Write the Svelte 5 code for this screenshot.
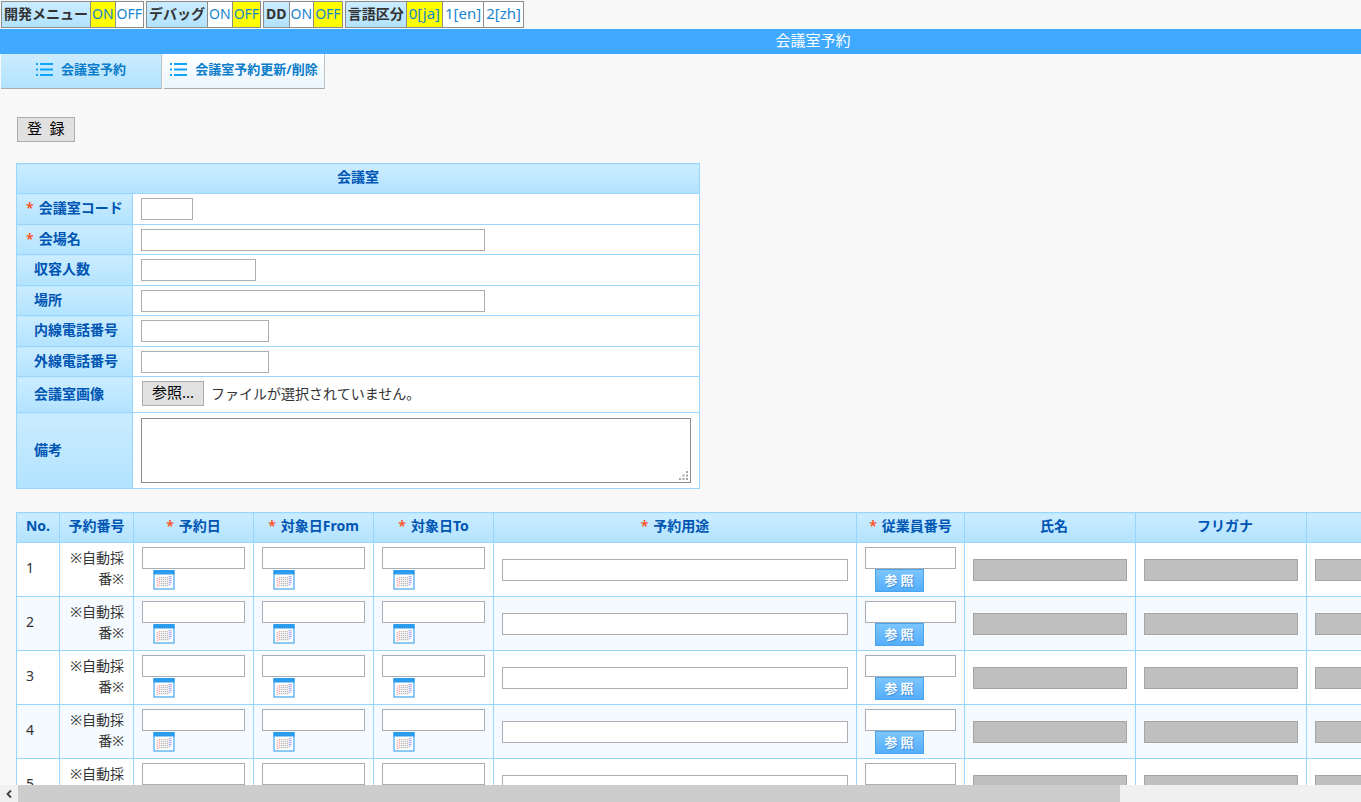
<script>
  const menus = [
    { label: '開発メニュー', options: ['ON', 'OFF'], active: 0 },
    { label: 'デバッグ', options: ['ON', 'OFF'], active: 1 },
    { label: 'DD', options: ['ON', 'OFF'], active: 1 },
    { label: '言語区分', options: ['0[ja]', '1[en]', '2[zh]'], active: 0, wide: true }
  ];
  const tabs = ['会議室予約', '会議室予約更新/削除'];
  const fields = [
    { id: 'code', label: '会議室コード', required: true, size: 'xs' },
    { id: 'name', label: '会場名', required: true, size: 'lg' },
    { id: 'capacity', label: '収容人数', required: false, size: 'sm' },
    { id: 'place', label: '場所', required: false, size: 'lg' },
    { id: 'ext', label: '内線電話番号', required: false, size: 'md' },
    { id: 'tel', label: '外線電話番号', required: false, size: 'md' }
  ];
  const columns = [
    { label: 'No.', cls: 'no' },
    { label: '予約番号', cls: 'number' },
    { label: '予約日', cls: 'date', required: true },
    { label: '対象日From', cls: 'date', required: true },
    { label: '対象日To', cls: 'date', required: true },
    { label: '予約用途', cls: 'purpose', required: true },
    { label: '従業員番号', cls: 'employee', required: true },
    { label: '氏名', cls: 'person' },
    { label: 'フリガナ', cls: 'person' },
    { label: '', cls: 'rest' }
  ];
  const rows = [1, 2, 3, 4, 5, 6];
  let current = $state(0);
</script>

{#snippet calendar()}
  <svg width="22" height="20" viewBox="0 0 22 20" aria-hidden="true">
    <rect x="1" y="1" width="20" height="18" fill="#fff" stroke="#5fb2f0" stroke-width="1.400" />
    <rect x="0.5" y="0" width="21" height="4.500" fill="#2b9bee" />
    <g stroke-width="1.400" stroke-dasharray="1.3 0.7">
      <path stroke="#f5a9a9" d="M4.500 8v9M6.500 7v10" />
      <path stroke="#bcbcbc" d="M8.500 7v10M10.500 7v10M12.500 7v10M14.500 7v10" />
      <path stroke="#b0a8f2" d="M16.500 6v10M18 6v8" />
    </g>
  </svg>
{/snippet}

<div class="screen">
  <div class="viewport">
    <div class="page">
      <nav class="dev">
        {#each menus as menu}
          <div class="menu" class:wide={menu.wide}>
            <strong>{menu.label}</strong>
            {#each menu.options as option, i}
              <a href="#top" class:on={menu.active === i}>{option}</a>
            {/each}
          </div>
        {/each}
      </nav>
      <h1>会議室予約</h1>
      <div class="tabs">
        {#each tabs as tab, i}
          <button class="tab" class:current={current === i} onclick={() => (current = i)}>
            <svg width="17" height="13" viewBox="0 0 17 13" aria-hidden="true">
              <path d="M0 1h2M4 1h13M0 6.500h2M4 6.500h13M0 12h2M4 12h13" stroke="#12a5f7" stroke-width="2" />
            </svg>
            <span>{tab}</span>
          </button>
        {/each}
      </div>

      <main>
        <button class="plain submit">登&ensp;録</button>

        <table class="room">
          <colgroup><col class="heads" /><col /></colgroup>
          <thead><tr><th colspan="2">会議室</th></tr></thead>
          <tbody>
            {#each fields as f}
              <tr>
                <th class:req={f.required}>
                  {#if f.required}<b>*</b>{/if}<label for={f.id}>{f.label}</label>
                </th>
                <td><input id={f.id} class={f.size} type="text" /></td>
              </tr>
            {/each}
            <tr class="filerow">
              <th><label for="image">会議室画像</label></th>
              <td>
                <div class="file">
                  <button id="image" class="plain">参照...</button>
                  <span>ファイルが選択されていません。</span>
                </div>
              </td>
            </tr>
            <tr class="noterow">
              <th><label for="note">備考</label></th>
              <td>
                <div class="note">
                  <textarea id="note"></textarea>
                  <svg class="grip" width="10" height="10" viewBox="0 0 10 10" aria-hidden="true">
                    <path fill="#a5a5a5" d="M7 0h2v2H7zM3.500 3.500h2v2h-2zM7 3.500h2v2H7zM0 7h2v2H0zM3.500 7h2v2h-2zM7 7h2v2H7z" />
                  </svg>
                </div>
              </td>
            </tr>
          </tbody>
        </table>

        <table class="list">
          <colgroup>
            {#each columns as c}<col class={c.cls} />{/each}
          </colgroup>
          <thead>
            <tr>
              {#each columns as c}
                <th class:readonly={c.cls === 'person'}>{#if c.required}<b>*</b>{/if}{c.label}</th>
              {/each}
            </tr>
          </thead>
          <tbody>
            {#each rows as n}
              <tr>
                <td class="text">{n}</td>
                <td class="text auto">※自動採番※</td>
                {#each ['予約日', '対象日From', '対象日To'] as name}
                  <td>
                    <div class="stack">
                      <input type="text" aria-label={name} />
                      <button class="cal" aria-label={name}>{@render calendar()}</button>
                    </div>
                  </td>
                {/each}
                <td><input type="text" aria-label="予約用途" /></td>
                <td>
                  <div class="stack">
                    <input type="text" aria-label="従業員番号" />
                    <button class="lookup">参照</button>
                  </div>
                </td>
                <td><input type="text" readonly aria-label="氏名" /></td>
                <td><input type="text" readonly aria-label="フリガナ" /></td>
                <td><input type="text" readonly /></td>
              </tr>
            {/each}
          </tbody>
        </table>
      </main>
    </div>
  </div>
  <div class="scrollbar">
    <span class="arrow">
      <svg width="8" height="10" viewBox="0 0 8 10" aria-hidden="true">
        <path d="M6 1.500 2.500 5 6 8.500" fill="none" stroke="#404040" stroke-width="1.800" />
      </svg>
    </span>
    <span class="thumb"></span>
  </div>
</div>

<style>
  :global(body) {
    margin: 0;
    background: #f8f8f8;
  }
  .screen,
  .screen * {
    box-sizing: border-box;
  }
  .screen {
    height: 100vh;
    display: flex;
    flex-direction: column;
    font: 14px/21px 'Noto Sans', 'Noto Sans CJK JP', sans-serif;
    color: #333;
  }
  button,
  input,
  textarea {
    font: inherit;
    margin: 0;
  }
  .viewport {
    flex: 1;
    min-height: 0;
    overflow: hidden;
  }
  .page {
    width: max-content;
    min-width: 100%;
  }
  .dev {
    display: flex;
    gap: 2px;
    padding: 1px 1px;
  }
  .menu {
    display: flex;
    height: 27px;
    border: 1px solid #8c8c8c;
    line-height: 23px;
    background: #fff;
  }
  .menu strong {
    padding: 0 2px;
    background: linear-gradient(#cbecff, #b2e3ff);
  }
  .menu a {
    padding: 0 1px;
    border-left: 1px solid #8c8c8c;
    color: #1a85cf;
    text-decoration: none;
  }
  .menu.wide a {
    padding: 0 2px;
    font-size: 15px;
  }
  .menu a.on {
    background: #ff0;
  }
  h1 {
    margin: 0;
    height: 25px;
    background: #3fa9ff;
    color: #fff;
    font-size: 15px;
    font-weight: 400;
    line-height: 23px;
    text-align: center;
  }
  .tabs {
    display: flex;
    gap: 2px;
    padding-left: 1px;
  }
  .tab {
    display: flex;
    align-items: center;
    justify-content: center;
    gap: 8px;
    width: 161px;
    height: 35px;
    padding: 0 0 3px;
    border: 0;
    border-right: 1px solid #bcc5ca;
    border-bottom: 1px solid #a5adb2;
    background: linear-gradient(#fff, #eaf6fe);
    color: #0b7cc9;
    font-size: 13px;
    font-weight: 700;
    white-space: nowrap;
  }
  .tab.current {
    background: linear-gradient(#cbecff, #b2e3ff);
  }
  main {
    padding: 28px 16px 0;
  }
  .plain {
    border: 1px solid #adadad;
    background: #e1e1e1;
    color: #000;
    height: 25px;
    padding: 0 9px 2px;
    font-size: 15px;
    line-height: 21px;
  }
  .submit {
    display: block;
    margin: 0 1px 21px;
  }
  table {
    border-collapse: collapse;
    table-layout: fixed;
    background: #fff;
  }
  th,
  td {
    border: 1px solid #99d6ff;
    padding: 0 8px;
  }
  th {
    height: 30px;
    padding-bottom: 4px;
    background: linear-gradient(#cbecff, #b2e3ff);
    color: #0055b3;
    font-weight: 700;
    white-space: nowrap;
  }
  th b {
    color: #ff4d1a;
    margin-right: 5px;
    font-weight: 600;
  }
  input {
    display: block;
    width: 100%;
    height: 22px;
    padding: 0 2px;
    border: 1px solid #abadb3;
    border-radius: 0;
    background: #fff;
  }
  input[readonly] {
    background: #bfbfbf;
    border-color: #a5a5a5;
  }
  .room {
    width: 684px;
    margin-bottom: 23px;
  }
  .heads {
    width: 116px;
  }
  .room tbody th {
    padding: 0 0 3px 17px;
    text-align: left;
  }
  .room tbody tr:nth-child(odd) th {
    height: 31px;
  }
  .room tbody th.req {
    padding-left: 9px;
  }
  .xs {
    width: 52px;
  }
  .sm {
    width: 115px;
  }
  .md {
    width: 128px;
  }
  .lg {
    width: 344px;
  }
  .filerow {
    height: 36px;
  }
  .noterow {
    height: 76px;
  }
  .file {
    display: flex;
    align-items: center;
    gap: 7px;
    padding: 0 0 2px 1px;
  }
  .note {
    position: relative;
  }
  textarea {
    display: block;
    width: 100%;
    height: 65px;
    border: 1px solid #8c8c8c;
    border-radius: 0;
    background: #fff;
    resize: none;
  }
  .grip {
    position: absolute;
    right: 2px;
    bottom: 2px;
  }
  .list {
    width: 1594px;
  }
  .no {
    width: 43px;
  }
  .number {
    width: 74px;
  }
  .date {
    width: 120px;
  }
  .purpose {
    width: 363px;
  }
  .employee {
    width: 108px;
  }
  .person {
    width: 171px;
  }
  .list th.readonly {
    padding-left: 16px;
  }
  .list td {
    height: 54px;
  }
  .list tbody tr:nth-child(even) {
    background: #f5faff;
  }
  .list .text {
    padding: 0 9px 4px;
  }
  .list .auto {
    text-align: right;
  }
  .stack {
    height: 45px;
  }
  .cal {
    display: block;
    margin: 1px 0 0 11px;
    padding: 0;
    border: 0;
    background: none;
    line-height: 0;
  }
  .lookup {
    display: block;
    width: 49px;
    height: 23px;
    margin-left: 10px;
    padding: 0 0 2px 2px;
    border: 1px solid #4aa5ee;
    background: linear-gradient(#7cc6ff, #55adfa);
    color: #fff;
    font-size: 13px;
    font-weight: 700;
    line-height: 18px;
    letter-spacing: 3px;
    text-shadow: 1px 1px 1px #3c8fd6;
  }
  .scrollbar {
    display: flex;
    height: 17px;
    background: #f0f0f0;
  }
  .arrow {
    display: flex;
    align-items: center;
    justify-content: center;
    width: 18px;
  }
  .thumb {
    width: 81%;
    background: #cdcdcd;
  }
</style>
